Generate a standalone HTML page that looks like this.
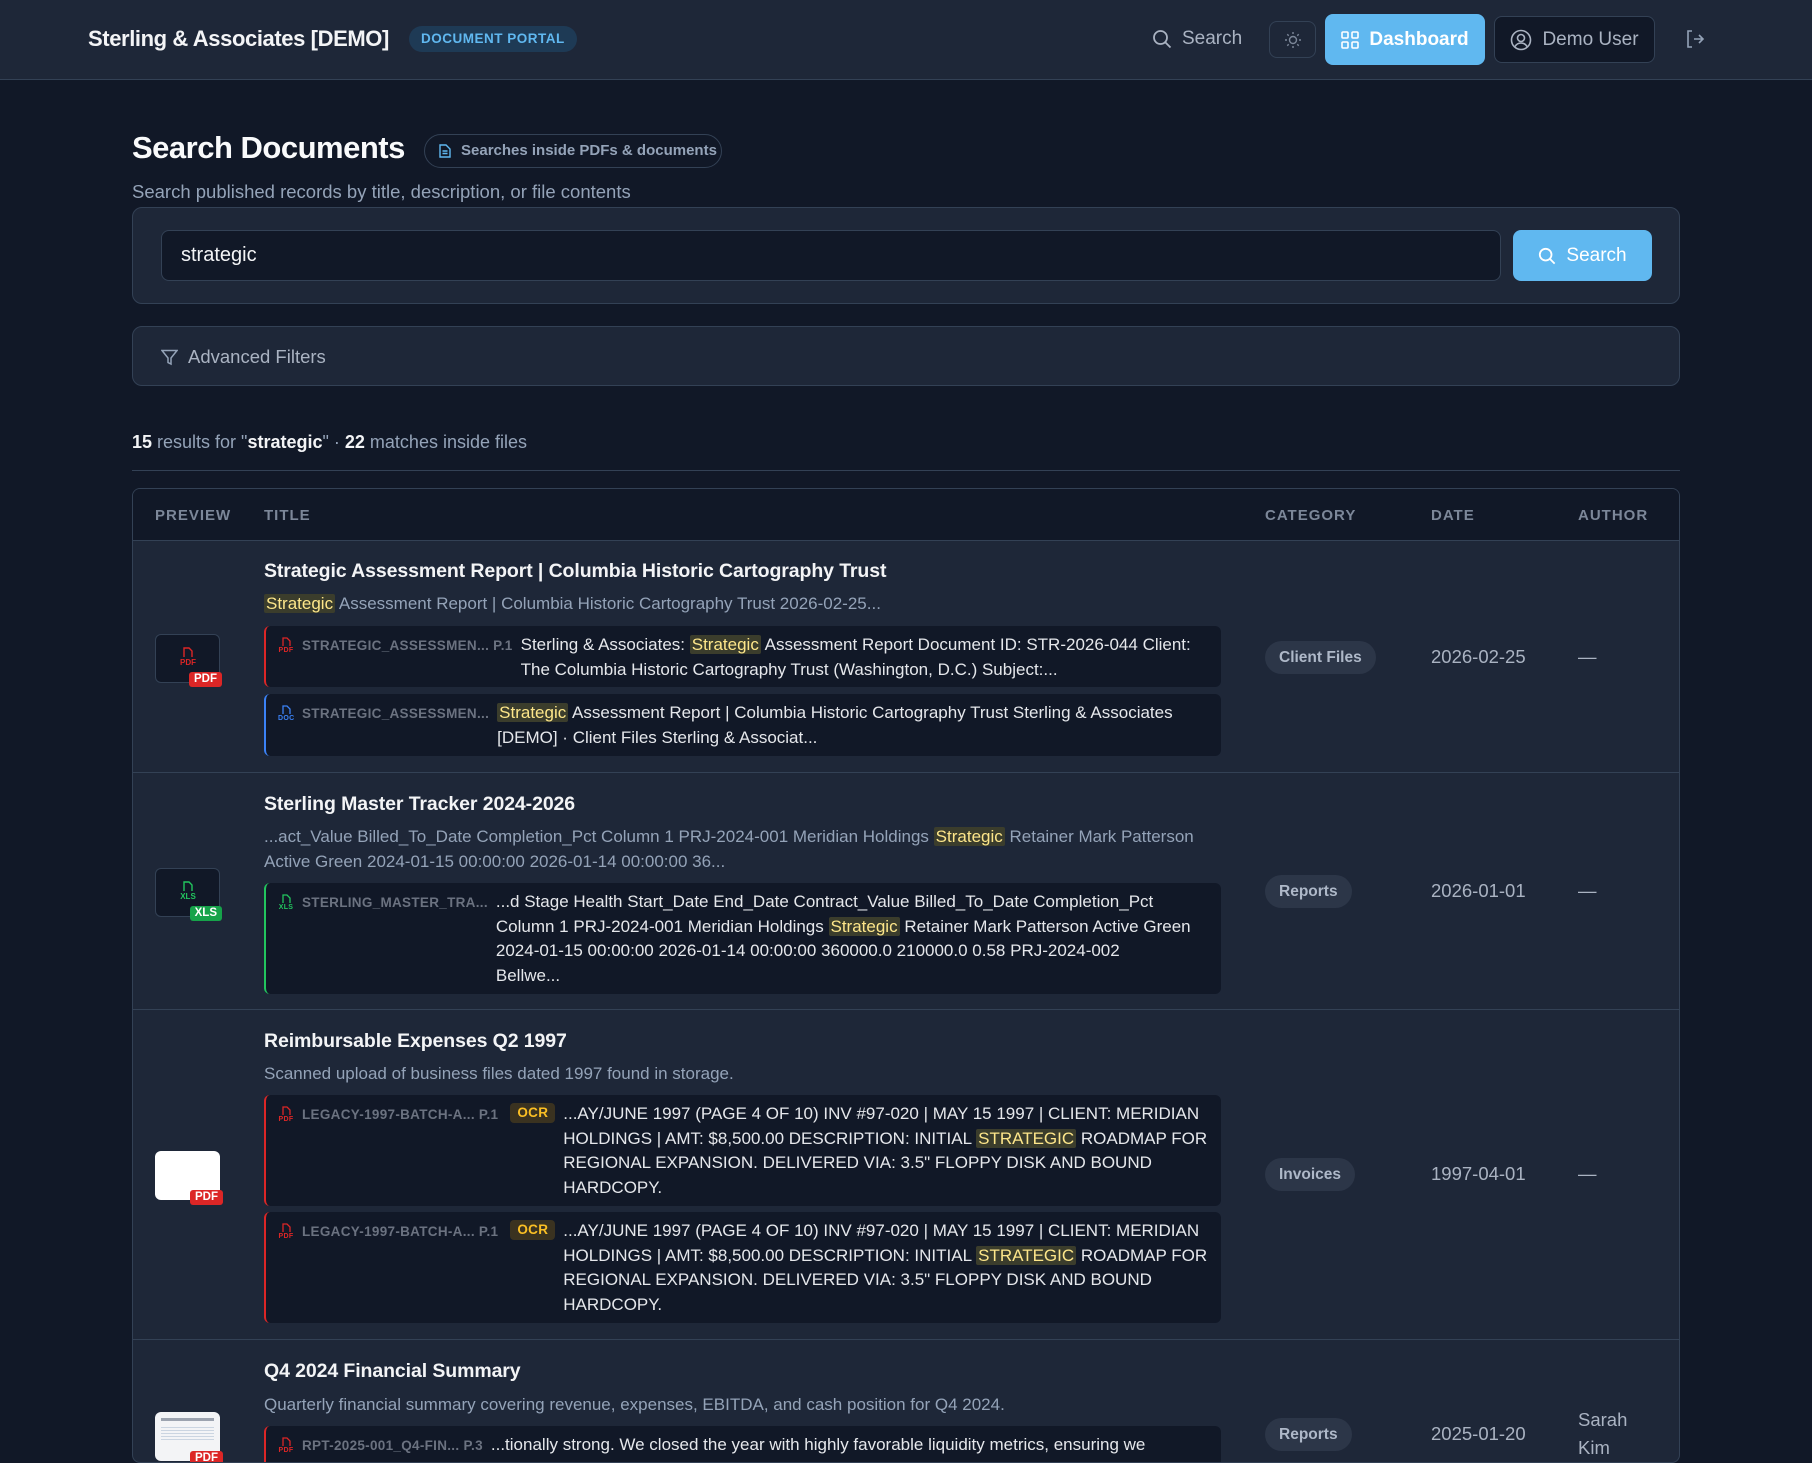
<!DOCTYPE html>
<html><head><meta charset="utf-8"><style>
*{box-sizing:border-box;margin:0;padding:0}
body{width:1812px;height:1458px;overflow:hidden;background:#111827;font-family:"Liberation Sans",sans-serif;color:#e5e7eb;position:relative}
.hdr{position:absolute;left:0;top:0;width:1812px;height:80px;background:#1e2738;border-bottom:1px solid #334155}
.abs{position:absolute}
.brand{left:88px;top:26px;font-size:22px;font-weight:bold;color:#f3f4f6;letter-spacing:-0.4px}
.portal{left:409px;top:26px;height:26px;padding:0 12px;border-radius:13px;background:#1e3a55;color:#60b8f0;font-size:13.5px;font-weight:bold;line-height:26px;letter-spacing:0.5px}
.btn{display:flex;align-items:center;gap:10px;font-size:19px}
.card{position:absolute;left:132px;width:1548px;background:#1e2738;border:1px solid #334155;border-radius:10px}
.tbl{position:absolute;left:132px;top:488px;width:1548px;height:975px;background:#1e2738;border:1px solid #334155;border-radius:8px;overflow:hidden}
.th{position:absolute;top:0;left:0;right:0;height:52px;background:#111827;border-bottom:1px solid #334155;font-size:15px;font-weight:bold;color:#7c8799;letter-spacing:1px}
.th span{position:absolute;top:18px}
.row{position:absolute;left:0;right:0;border-bottom:1px solid #334155}
.title{position:absolute;left:131px;font-size:19.5px;font-weight:bold;color:#f3f4f6;white-space:nowrap;letter-spacing:-0.1px}
.desc{position:absolute;left:131px;font-size:17px;color:#94a3b8;line-height:25px;white-space:nowrap}
.hl{background:#3b3d2c;color:#fde68a;padding:0 2px;border-radius:2px}
.mb{position:absolute;left:131px;width:957px;background:#111827;border-radius:6px;border-left:2px solid #dc2626;display:flex;padding:7px 10px 7px 12px;font-size:17px;line-height:24.5px;color:#e5e7eb}
.mb .lab{display:flex;align-items:flex-start;gap:8px;white-space:nowrap;font-size:13.5px;font-weight:bold;color:#6b7280;margin-right:8px;padding-top:1px;letter-spacing:0.3px}
.mb .txt{white-space:nowrap}
.fi{display:inline-block;width:16px;text-align:center;font-size:7px;font-weight:bold;line-height:7px;margin-top:3px}
.fi svg{display:block;margin:0 auto 1px}
.ocr{background:#3a3220;color:#fbbf24;font-size:13.5px;font-weight:bold;border-radius:4px;padding:0 7px;height:20px;line-height:20px;margin-left:4px}
.thumb{position:absolute;left:22px;width:65px;height:49px;border-radius:6px}
.badge{position:absolute;right:-3px;bottom:-5px;background:#dc2626;color:#fff;font-size:11.5px;font-weight:bold;padding:0 5px;border-radius:3px;line-height:15px}
.pill{position:absolute;left:1132px;height:33px;padding:0 14px;border-radius:17px;background:#2c3648;color:#aeb8c8;font-size:15.5px;font-weight:bold;line-height:33px}
.date{position:absolute;left:1298px;font-size:18.5px;color:#aab3c2}
.auth{position:absolute;left:1445px;font-size:18.5px;color:#aab3c2;line-height:28px}
.ti{position:absolute;left:24px;top:12px;width:16px;text-align:center;font-size:8px;font-weight:bold;line-height:8px}
.ti svg{display:block;margin:0 auto 1px}
</style></head><body>
<div class="hdr">
 <div class="abs brand">Sterling &amp; Associates [DEMO]</div>
 <div class="abs portal">DOCUMENT PORTAL</div>
 <div class="abs btn" style="left:1152px;top:28px;color:#aab3c2"><svg width="20" height="20" viewBox="0 0 20 20" fill="none" stroke="#aab3c2" stroke-width="1.8"><circle cx="8.5" cy="8.5" r="6.5"/><path d="M13.5 13.5l5 5"/></svg>Search</div>
 <div class="abs" style="left:1269px;top:21px;width:47px;height:37px;border:1px solid #334155;border-radius:8px;background:#1e2738"><svg style="position:absolute;left:14px;top:9px" width="18" height="18" viewBox="0 0 18 18" fill="none" stroke="#7c8799" stroke-width="1.4"><circle cx="9" cy="9" r="3.5"/><path d="M9 1v2M9 15v2M1 9h2M15 9h2M3.3 3.3l1.4 1.4M13.3 13.3l1.4 1.4M3.3 14.7l1.4-1.4M13.3 4.7l1.4-1.4"/></svg></div>
 <div class="abs btn" style="left:1325px;top:14px;width:160px;height:51px;border-radius:8px;background:#60b8f0;color:#fff;font-weight:bold;justify-content:center"><svg width="18" height="18" viewBox="0 0 18 18" fill="none" stroke="#fff" stroke-width="1.6"><rect x="1" y="1" width="6" height="6" rx="1"/><rect x="11" y="1" width="6" height="6" rx="1"/><rect x="1" y="11" width="6" height="6" rx="1"/><rect x="11" y="11" width="6" height="6" rx="1"/></svg>Dashboard</div>
 <div class="abs btn" style="left:1494px;top:16px;width:161px;height:47px;border-radius:8px;background:#111827;border:1px solid #334155;color:#aab3c2;justify-content:center"><svg width="22" height="22" viewBox="0 0 22 22" fill="none" stroke="#aab3c2" stroke-width="1.6"><circle cx="11" cy="11" r="9.5"/><circle cx="11" cy="9" r="3.5"/><path d="M5 17.5c1.5-2.5 3.5-3.5 6-3.5s4.5 1 6 3.5"/></svg>Demo User</div>
 <svg class="abs" style="left:1685px;top:29px" width="20" height="20" viewBox="0 0 20 20" fill="none" stroke="#94a3b8" stroke-width="1.6"><path d="M7 2H3v16h4M9 10h9M14 6l4 4-4 4"/></svg>
</div>

<div class="abs" style="left:132px;top:130px;font-size:31px;font-weight:bold;color:#f9fafb;letter-spacing:-0.5px">Search Documents</div>
<div class="abs" style="left:424px;top:134px;width:298px;height:34px;border:1px solid #334155;border-radius:17px;font-size:15px;font-weight:bold;color:#94a3b8;line-height:32px;padding-left:36px;white-space:nowrap">Searches inside PDFs &amp; documents
<svg style="position:absolute;left:14px;top:9px" width="12" height="14" viewBox="0 0 12 14" fill="none" stroke="#60b8f0" stroke-width="1.4"><path d="M1 1h6l4 4v8H1z"/><path d="M3.5 7h5M3.5 9.5h5"/></svg></div>
<div class="abs" style="left:132px;top:181px;font-size:18.5px;color:#94a3b8">Search published records by title, description, or file contents</div>

<div class="card" style="top:207px;height:97px">
 <div class="abs" style="left:28px;top:22px;width:1340px;height:51px;background:#111827;border:1px solid #334155;border-radius:8px;font-size:20px;color:#f3f4f6;line-height:49px;padding-left:19px">strategic</div>
 <div class="abs btn" style="left:1380px;top:22px;width:139px;height:51px;border-radius:8px;background:#60b8f0;color:#fff;justify-content:center;font-size:19px"><svg width="18" height="18" viewBox="0 0 20 20" fill="none" stroke="#fff" stroke-width="2"><circle cx="8.5" cy="8.5" r="6.5"/><path d="M13.5 13.5l5 5"/></svg>Search</div>
</div>
<div class="card" style="top:326px;height:60px">
 <svg class="abs" style="left:28px;top:22px" width="17" height="17" viewBox="0 0 17 17" fill="none" stroke="#94a3b8" stroke-width="1.5"><path d="M1 1.5h15L10 9v6l-3-1.5V9z"/></svg>
 <div class="abs" style="left:55px;top:19px;font-size:18.5px;color:#aab3c2">Advanced Filters</div>
</div>

<div class="abs" style="left:132px;top:432px;font-size:18px;color:#94a3b8"><b style="color:#f3f4f6">15</b> results for "<b style="color:#f3f4f6">strategic</b>" · <b style="color:#f3f4f6">22</b> matches inside files</div>
<div class="abs" style="left:132px;top:470px;width:1548px;height:1px;background:#334155"></div>

<div class="tbl">
 <div class="th"><span style="left:22px">PREVIEW</span><span style="left:131px">TITLE</span><span style="left:1132px">CATEGORY</span><span style="left:1298px">DATE</span><span style="left:1445px">AUTHOR</span></div>

 <div class="row" style="top:52px;height:232px">
  <div class="thumb" style="top:93px;background:#111827;border:1px solid #334155"><div class="ti" style="color:#dc2626"><svg width="10" height="11" viewBox="0 0 10 11" fill="none" stroke="#dc2626" stroke-width="1.4"><path d="M1 10V1h5l3 3v6"/></svg>PDF</div><div class="badge">PDF</div></div>
  <div class="title" style="top:19px">Strategic Assessment Report | Columbia Historic Cartography Trust</div>
  <div class="desc" style="top:50px"><span class="hl">Strategic</span> Assessment Report | Columbia Historic Cartography Trust 2026-02-25...</div>
  <div class="mb" style="top:85px;height:61px"><div class="lab"><span class="fi" style="color:#dc2626"><svg width="9" height="9" viewBox="0 0 9 9" fill="none" stroke="#dc2626" stroke-width="1.3"><path d="M1 9V1h4l3 3v5"/></svg>PDF</span>STRATEGIC_ASSESSMEN... P.1</div><div class="txt">Sterling &amp; Associates: <span class="hl">Strategic</span> Assessment Report Document ID: STR-2026-044 Client:<br>The Columbia Historic Cartography Trust (Washington, D.C.) Subject:...</div></div>
  <div class="mb" style="top:153px;height:62px;border-left-color:#3b82f6"><div class="lab"><span class="fi" style="color:#3b82f6"><svg width="9" height="9" viewBox="0 0 9 9" fill="none" stroke="#3b82f6" stroke-width="1.3"><path d="M1 9V1h4l3 3v5"/></svg>DOC</span>STRATEGIC_ASSESSMEN...</div><div class="txt"><span class="hl">Strategic</span> Assessment Report | Columbia Historic Cartography Trust Sterling &amp; Associates<br>[DEMO] · Client Files Sterling &amp; Associat...</div></div>
  <div class="pill" style="top:100px">Client Files</div>
  <div class="date" style="top:105px">2026-02-25</div>
  <div class="auth" style="top:102px">—</div>
 </div>

 <div class="row" style="top:284px;height:237px">
  <div class="thumb" style="top:95px;background:#111827;border:1px solid #334155"><div class="ti" style="color:#22c55e"><svg width="10" height="11" viewBox="0 0 10 11" fill="none" stroke="#22c55e" stroke-width="1.4"><path d="M1 10V1h5l3 3v6"/></svg>XLS</div><div class="badge" style="background:#16a34a">XLS</div></div>
  <div class="title" style="top:20px">Sterling Master Tracker 2024-2026</div>
  <div class="desc" style="top:51px">...act_Value Billed_To_Date Completion_Pct Column 1 PRJ-2024-001 Meridian Holdings <span class="hl">Strategic</span> Retainer Mark Patterson<br>Active Green 2024-01-15 00:00:00 2026-01-14 00:00:00 36...</div>
  <div class="mb" style="top:110px;height:111px;border-left-color:#22c55e"><div class="lab"><span class="fi" style="color:#22c55e"><svg width="9" height="9" viewBox="0 0 9 9" fill="none" stroke="#22c55e" stroke-width="1.3"><path d="M1 9V1h4l3 3v5"/></svg>XLS</span>STERLING_MASTER_TRA...</div><div class="txt">...d Stage Health Start_Date End_Date Contract_Value Billed_To_Date Completion_Pct<br>Column 1 PRJ-2024-001 Meridian Holdings <span class="hl">Strategic</span> Retainer Mark Patterson Active Green<br>2024-01-15 00:00:00 2026-01-14 00:00:00 360000.0 210000.0 0.58 PRJ-2024-002<br>Bellwe...</div></div>
  <div class="pill" style="top:102px">Reports</div>
  <div class="date" style="top:107px">2026-01-01</div>
  <div class="auth" style="top:104px">—</div>
 </div>

 <div class="row" style="top:521px;height:330px">
  <div class="thumb" style="top:141px;background:#fff"><div class="badge">PDF</div></div>
  <div class="title" style="top:20px">Reimbursable Expenses Q2 1997</div>
  <div class="desc" style="top:51px">Scanned upload of business files dated 1997 found in storage.</div>
  <div class="mb" style="top:85px;height:111px"><div class="lab"><span class="fi" style="color:#dc2626"><svg width="9" height="9" viewBox="0 0 9 9" fill="none" stroke="#dc2626" stroke-width="1.3"><path d="M1 9V1h4l3 3v5"/></svg>PDF</span>LEGACY-1997-BATCH-A... P.1<span class="ocr">OCR</span></div><div class="txt">...AY/JUNE 1997 (PAGE 4 OF 10) INV #97-020 | MAY 15 1997 | CLIENT: MERIDIAN<br>HOLDINGS | AMT: $8,500.00 DESCRIPTION: INITIAL <span class="hl">STRATEGIC</span> ROADMAP FOR<br>REGIONAL EXPANSION. DELIVERED VIA: 3.5" FLOPPY DISK AND BOUND<br>HARDCOPY.</div></div>
  <div class="mb" style="top:202px;height:111px"><div class="lab"><span class="fi" style="color:#dc2626"><svg width="9" height="9" viewBox="0 0 9 9" fill="none" stroke="#dc2626" stroke-width="1.3"><path d="M1 9V1h4l3 3v5"/></svg>PDF</span>LEGACY-1997-BATCH-A... P.1<span class="ocr">OCR</span></div><div class="txt">...AY/JUNE 1997 (PAGE 4 OF 10) INV #97-020 | MAY 15 1997 | CLIENT: MERIDIAN<br>HOLDINGS | AMT: $8,500.00 DESCRIPTION: INITIAL <span class="hl">STRATEGIC</span> ROADMAP FOR<br>REGIONAL EXPANSION. DELIVERED VIA: 3.5" FLOPPY DISK AND BOUND<br>HARDCOPY.</div></div>
  <div class="pill" style="top:148px">Invoices</div>
  <div class="date" style="top:153px">1997-04-01</div>
  <div class="auth" style="top:150px">—</div>
 </div>

 <div class="row" style="top:851px;height:300px;border-bottom:none">
  <div class="thumb" style="top:72px;background:#f3f4f6"><div style="margin:6px;height:3px;background:#9ca3af"></div><div style="margin:4px 6px;height:14px;background:repeating-linear-gradient(#cbd5e1 0 1px,#f3f4f6 1px 3px)"></div><div class="badge">PDF</div></div>
  <div class="title" style="top:20px">Q4 2024 Financial Summary</div>
  <div class="desc" style="top:52px">Quarterly financial summary covering revenue, expenses, EBITDA, and cash position for Q4 2024.</div>
  <div class="mb" style="top:86px;height:111px"><div class="lab"><span class="fi" style="color:#dc2626"><svg width="9" height="9" viewBox="0 0 9 9" fill="none" stroke="#dc2626" stroke-width="1.3"><path d="M1 9V1h4l3 3v5"/></svg>PDF</span>RPT-2025-001_Q4-FIN... P.3</div><div class="txt">...tionally strong. We closed the year with highly favorable liquidity metrics, ensuring we</div></div>
  <div class="pill" style="top:78px">Reports</div>
  <div class="date" style="top:83px">2025-01-20</div>
  <div class="auth" style="top:66px">Sarah<br>Kim</div>
 </div>
</div>
</body></html>
